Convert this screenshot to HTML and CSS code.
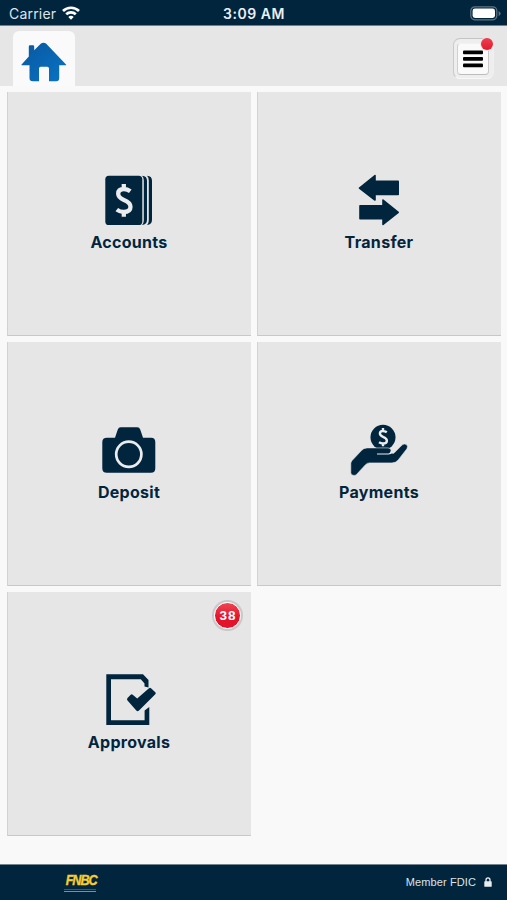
FILE: index.html
```html
<!DOCTYPE html>
<html lang="en">
<head>
<meta charset="utf-8">
<title>Mobile Banking</title>
<link rel="stylesheet" href="styles.css">
</head>
<body>
<div class="status">
  <div class="carrier"><span>Carrier</span>
    <svg class="wifi" width="18" height="14" viewBox="0 0 18 14" fill="none" stroke="#fff" stroke-width="2.7"><path d="M1 5a11.5 11.5 0 0 1 16 0M4.200 8.300a7 7 0 0 1 9.600 0"/><path d="M9 13.700L6.300 11a4 4 0 0 1 5.400 0z" fill="#fff" stroke="none"/></svg>
  </div>
  <span class="time">3:09 AM</span>
  <svg class="battery" width="31" height="15" viewBox="0 0 31 15"><rect x=".8" y=".8" width="26" height="13" rx="4" fill="none" stroke="#607582" stroke-width="1.200"/><rect x="2.600" y="2.600" width="22.400" height="9.400" rx="2.400" fill="#fff"/><path d="M28.600 5v5q2-1 2-2.500t-2-2.500" fill="#607582"/></svg>
</div>
<header class="bar">
  <div class="tab">
    <svg width="46" height="40" viewBox="0 0 46 40"><defs><linearGradient id="blue" x1="0" y1="0" x2="1" y2="1"><stop offset="0" stop-color="#0a579f"/><stop offset="1" stop-color="#0874c4"/></linearGradient></defs><path fill="url(#blue)" d="M7.800 4.500q0-1.200 1.200-1.200h3q1.200 0 1.200 1.200v3.800L20 1.500q2.500-1.700 5 0L45 22.500q.5.800-.6.800h-6.200v13q0 3-3 3H28V26.500q0-1.700-1.700-1.700h-6.600q-1.700 0-1.700 1.700v12.800h-6.200q-3.300 0-3.300-3v-13H1.200q-1.100 0-.6-.8l7.200-8z"/></svg>
  </div>
  <div class="menu">
    <div class="menu-face"><svg width="20" height="18" viewBox="0 0 20 18"><rect y=".5" width="20" height="3.700" rx="1"/><rect y="7" width="20" height="3.700" rx="1"/><rect y="13.500" width="20" height="3.700" rx="1"/></svg></div>
    <span class="dot"></span>
  </div>
</header>
<main class="grid">
  <div class="tile">
    <svg class="icon" viewBox="0 0 100 60"><rect x="26.300" y="5.700" width="37" height="49.300" rx="3.600"/><path d="M63 5.700q5 .2 5 5v39q0 5-5 5.300 1.800-1.500 1.800-4.500v-40q0-3.300-1.800-4.800zM68 5.700q5 .2 5 5v39q0 5-5 5.300 1.800-1.500 1.800-4.500v-40q0-3.300-1.800-4.800z"/><path class="cut" d="M51.300 21.300q-3-2.300-6.300-2.300-5.800 0-5.800 4.800 0 3.800 5.700 6.100 6.600 2.600 6.600 6.900 0 5.200-6.800 5.200-3.700 0-6.900-2.400M44.800 14v5M44.800 41v5.800" stroke-width="4.300"/></svg>
    <span class="label">Accounts</span>
  </div>
  <div class="tile">
    <svg class="icon round" viewBox="0 0 100 60"><path d="M30.500 18L46 5.500V11.400H69.200V24.500H46V30z M69.200 42.300L54 30V35.700H31V48.700H54V54.500z"/></svg>
    <span class="label">Transfer</span>
  </div>
  <div class="tile">
    <svg class="icon" viewBox="0 0 100 60"><path d="M28 17.700h8l2.700-8q.8-2.400 3-2.400h16.600q2.200 0 3 2.400l2.700 8h8q4.300 0 4.300 4.300v26.200q0 4.500-4.500 4.500H27.800q-4.500 0-4.500-4.500V22q0-4.300 4.700-4.300z"/><circle class="cut" cx="49.800" cy="34.300" r="12.600" stroke-width="2.700"/></svg>
    <span class="label">Deposit</span>
  </div>
  <div class="tile">
    <svg class="icon" viewBox="0 0 100 60"><circle cx="54" cy="17.300" r="12.500"/><path stroke="#e6e6e6" stroke-width=".6" d="M21.800 43.500q0-1.500 1.300-3L32.500 30.500q2-2.600 5.500-2.600H59q3 0 3 2.600 0 2-1.500 2.800h4.300l8.500-8.500q2-1.700 4.200-.2 1.900 1.800.4 4.200L69 40.200q-2.300 2.700-6 2.700H40.500q-2.300 0-4 1.800L27.500 54.500q-1.200 1.300-3.500.8-2.200-.5-2.200-2.600z"/><path class="cut" d="M48 34H59.500q2.300 0 2.800-2" stroke-width="1.100"/><path class="cut" d="M57.800 12.300q-1.900-1.300-3.900-1.300-3 0-3 2.600 0 2 3.100 3.200 3.900 1.500 3.900 3.900 0 2.800-3.900 2.800-2 0-4-1.300M54 8v3M54 23v3.300" stroke-width="2.400"/></svg>
    <span class="label">Payments</span>
  </div>
  <div class="tile">
    <svg class="icon" viewBox="0 0 100 60"><path d="M69.500 17.500V10L64 4.300H27.300V55H70.300V37L65.600 40.500V50.200H32V9.200H61.800L65.500 13.500V16.500z"/><path d="M48.500 28l3.200-3.300q1-1 2 0l4.500 3.800L70 18.200q1-.8 2 0l4.300 4q1 1 0 2L60 40.500q-1.400 1.300-2.700 0L48.500 30.500q-1-1.300 0-2.500z"/></svg>
    <span class="label">Approvals</span>
    <span class="badge">38</span>
  </div>
</main>
<footer class="foot">
  <div class="logo"><span class="name">FNBC</span><span class="rule"></span></div>
  <div class="member"><span>Member FDIC</span>
    <svg width="8" height="10" viewBox="0 0 8 10"><path d="M2 5V3q0-2.200 2-2.200T6 3v2" fill="none" stroke="#e8edf0" stroke-width="1.300"/><rect x=".3" y="4.300" width="7.400" height="5.500" rx=".6" fill="#e8edf0"/></svg>
  </div>
</footer>
</body>
</html>
```
FILE: styles.css
```css
* { box-sizing: border-box; }
body {
  margin: 0;
  height: 900px;
  display: flex;
  flex-direction: column;
  background: #f9f9f9;
  font-family: "Liberation Sans", Arial, sans-serif;
  color: #02253e;
  overflow: hidden;
}
.status {
  height: 26px;
  flex: none;
  display: grid;
  grid-template-columns: 1fr auto 1fr;
  align-items: center;
  padding: 2px 6px 0 9px;
  background: #02253e;
  border-bottom: 1px solid #6d8090;
  color: #fff;
  font-family: Inter, sans-serif;
  font-size: 14px;
  line-height: 23px;
}
.carrier { display: flex; align-items: center; gap: 6px; color: #dde4e9; letter-spacing: .2px; }
.wifi { margin-top: -2px; }
.time { margin-left: -2px; font-weight: 600; font-size: 14px; letter-spacing: .55px; color: #e9eff3; }
.battery { justify-self: end; }
.bar {
  height: 60px;
  flex: none;
  display: flex;
  justify-content: space-between;
  align-items: flex-start;
  padding: 5px 13px 0;
  background: #e6e6e6;
}
.tab {
  width: 62px;
  height: 55px;
  padding: 11px 0 0 8px;
  border-radius: 6px 6px 0 0;
  background: #fafafa;
}
.tab svg { display: block; }
.menu {
  position: relative;
  width: 41px;
  height: 41px;
  margin-top: 7px;
  padding: 4px 4px 4px 3px;
  border-radius: 7px;
  border: 1px solid;
  border-color: #c4c4c4 #f0f0f0 #f8f8f8 #cacaca;
  background: #eeeeee;
}
.menu-face {
  height: 32px;
  width: 32px;
  display: flex;
  justify-content: center;
  align-items: center;
  border: 1px solid;
  border-color: #f2f2f2 #c8c8c8 #bcbcbc #d0d0d0;
  border-radius: 4px;
  background: #fafafa;
}
.dot {
  position: absolute;
  top: -1px;
  right: 0;
  width: 12px;
  height: 12px;
  border-radius: 50%;
  background: linear-gradient(#ee4050, #df1c2e);
  box-shadow: 0 0 0 1px #f0e4e4;
}
.grid {
  flex: 1;
  display: grid;
  grid-template-columns: 244px 244px;
  grid-auto-rows: 244px;
  gap: 6px;
  padding: 6px 7px 0;
}
.tile {
  position: relative;
  display: flex;
  flex-direction: column;
  align-items: center;
  padding: 78px 1px 0 0;
  background: #e6e6e6;
  border-left: 1px solid #d2d2d2;
  border-bottom: 1px solid #c8c8c8;
}
.icon { width: 100px; height: 60px; fill: #02253e; }
.cut { fill: none; stroke: #eaeced; }
.round path { stroke: #02253e; stroke-width: 1.600; stroke-linejoin: round; }
.label { margin-top: 2px; font-family: Inter, "Liberation Sans", sans-serif; font-size: 16px; line-height: 20px; font-weight: 700; letter-spacing: .3px; }
.badge {
  position: absolute;
  top: 10px;
  right: 10px;
  width: 27px;
  height: 27px;
  border: 1.500px solid #fff;
  border-radius: 50%;
  background: linear-gradient(#ef4653, #e2132b 60%);
  box-shadow: 0 0 0 2px #c9c9c9;
  color: #fff;
  font: 700 13.500px/25px "Liberation Sans", sans-serif;
  letter-spacing: .8px;
  text-indent: .8px;
  text-align: center;
}
.foot {
  height: 36px;
  flex: none;
  display: flex;
  justify-content: space-between;
  align-items: flex-start;
  padding: 0 15px 0 64px;
  background: #02253e;
  border-top: 1px solid #73838f;
}
.logo { width: 36px; padding-top: 8px; }
.name {
  display: block;
  padding-left: 2px;
  color: #f6cd34;
  font: italic 700 15px/13px "Liberation Sans", sans-serif;
  letter-spacing: -1.200px;
  transform: scaleX(.84);
  transform-origin: left;
  -webkit-text-stroke: .4px #f6cd34;
  white-space: nowrap;
}
.rule { display: block; width: 32px; height: 3px; margin-top: 3px; border-top: 1px solid #4b5355; border-bottom: 1px solid #a69034; }
.member {
  display: flex;
  align-items: center;
  gap: 8px;
  padding-top: 10px;
  color: #dce3e8;
  font-size: 11px;
  line-height: 14px;
  letter-spacing: .1px;
}
```
